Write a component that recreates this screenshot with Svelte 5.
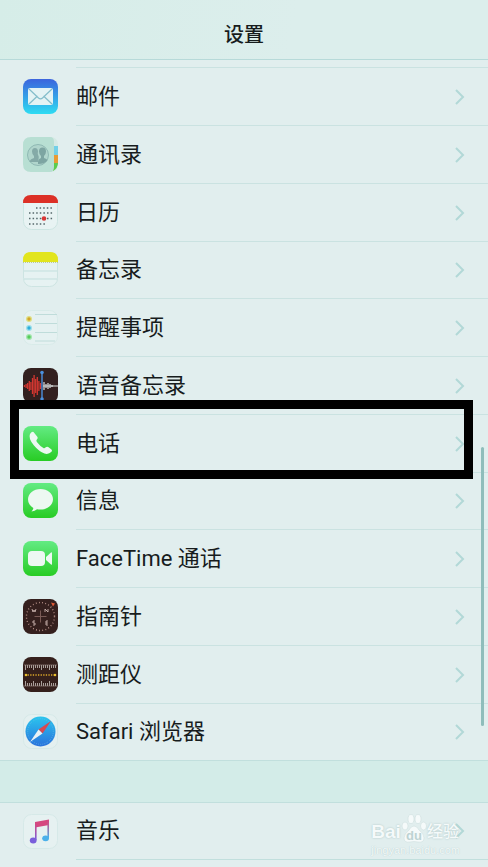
<script lang="ts">
	type Item = { id: string; label: string; marked?: boolean };

	const apps: Item[] = [
		{ id: 'mail', label: '邮件' },
		{ id: 'contacts', label: '通讯录' },
		{ id: 'calendar', label: '日历' },
		{ id: 'notes', label: '备忘录' },
		{ id: 'reminders', label: '提醒事项' },
		{ id: 'voice', label: '语音备忘录' },
		{ id: 'phone', label: '电话', marked: true },
		{ id: 'messages', label: '信息' },
		{ id: 'facetime', label: 'FaceTime 通话' },
		{ id: 'compass', label: '指南针' },
		{ id: 'measure', label: '测距仪' },
		{ id: 'safari', label: 'Safari 浏览器' }
	];

	const media: Item[] = [{ id: 'music', label: '音乐' }];

	const wave = [1, 2, 3, 5, 4, 8, 11, 7, 9, 5, 3];
	const ticks = Array.from({ length: 16 }, (_, i) => i);
</script>

{#snippet icon(id: string)}
	<svg class="icon" viewBox="0 0 35 35" aria-hidden="true">
		{#if id === 'mail'}
			<rect width="35" height="35" rx="8" fill="url(#blue)" />
			<rect x="5" y="9" width="25" height="17" rx="2" fill="#e4f3f4" />
			<path d="M6 25l8.500-8M29 25l-8.500-8M6 10l9.500 9q2 1.800 4 0l9.500-9" fill="none" stroke="#83bdca" stroke-width="1.200" />
		{:else if id === 'contacts'}
			<rect x="20" width="15" height="35" rx="7" fill="#d5e9e4" />
			<path d="M30 9h5v9h-5z" fill="#72d0e8" />
			<path d="M30 18h5v8h-5z" fill="#e99b33" />
			<path d="M30 26h5q0 5-5 8z" fill="#5ccc4d" />
			<path d="M8 0h19q4 0 4 5v25q0 5-4 5H8q-8 0-8-8V8q0-8 8-8z" fill="#b8dfd3" />
			<circle cx="15" cy="18" r="10.500" fill="#b0d5cc" stroke="#85b0ac" stroke-width=".8" />
			<path d="M15 25H6.500q.5-3 4.500-4v-2q-2-2-2-4.500Q9 11 12 11q2.500 0 3 3-.8 3 .7 5.500v1.500z" fill="#84aaa7" />
			<path d="M15 25q0-3 3-4v-2q-2-2-2-4.500 0-4 3.500-4t3.500 4q0 2.500-2 4.500v2q3 .8 3.500 2.500-3 3.500-9.500 3.500z" fill="#7da5a2" />
		{:else if id === 'calendar'}
			<rect x=".5" y=".5" width="34" height="34" rx="8" fill="#e8f3f3" stroke="#cde5e2" />
			<path d="M0 8q0-8 8-8h19q8 0 8 8z" fill="#dc3026" />
			<g stroke="#53676a" stroke-width="1.400" stroke-dasharray="1.500 2.100">
				<path d="M13 13h17M6 18h24M6 23.500h24M6 29h16" />
			</g>
			<circle cx="21" cy="23.500" r="2.300" fill="#d83736" />
		{:else if id === 'notes'}
			<rect x=".5" y=".5" width="34" height="34" rx="8" fill="#e6f2f2" stroke="#cde4e2" />
			<path d="M0 10V8q0-8 8-8h19q8 0 8 8v2z" fill="#e2e51d" />
			<path d="M0 10.500h35" stroke="#b9c995" stroke-dasharray="1 1" />
			<path d="M1 19h33M1 27h33" stroke="#c2dfdd" />
		{:else if id === 'reminders'}
			<rect x=".5" y=".5" width="34" height="34" rx="8" fill="#e5f1f1" stroke="#d8ebe9" />
			<path d="M12 4.500h22M12 13.500h22M12 22.500h22M12 31h20" stroke="#bfdcda" />
			<circle cx="6" cy="9" r="3" fill="#dddf82" /><circle cx="6" cy="9" r="1.700" fill="#d2a52a" />
			<circle cx="6" cy="18" r="3" fill="#9bdfe9" /><circle cx="6" cy="18" r="1.700" fill="#2caedb" />
			<circle cx="6" cy="27" r="3" fill="#a2e5ad" /><circle cx="6" cy="27" r="1.700" fill="#55cc59" />
		{:else if id === 'voice'}
			<rect width="35" height="35" rx="8" fill="#32201f" />
			{#each wave as h, i}
				<path d="M{1.5 + i * 1.6} {18 - h}v{h * 2}" stroke="#d43731" stroke-width="1.300" />
			{/each}
			<path d="M19 4v28" stroke="#4b91df" stroke-width="1.400" />
			<circle cx="19" cy="4.500" r="1.800" fill="#4b91df" /><circle cx="19" cy="31" r="1.800" fill="#4b91df" />
			<path d="M21 14v8M23 16v4M25 15v6M27 16v4M29 17v2M20 18h15" stroke="#d9dfdf" stroke-width="1.200" />
		{:else if id === 'phone'}
			<rect width="35" height="35" rx="8" fill="url(#green)" />
			<path d="M7 8q2-3 3.500-2l4 5q.8 1.300-.8 2.800-.8 1 .2 2.200 3 4 6.500 6 1 .6 2-.4 1.500-1.500 2.800-.6l3.300 2.500q1 1 0 2.300-3 3-7 1.800Q16 25.500 11 19.500 5 12.500 7 8z" fill="#edf8f2" />
		{:else if id === 'messages'}
			<rect width="35" height="35" rx="8" fill="url(#green)" />
			<path d="M17.500 6C10.500 6 5 10.500 5 16.300c0 3.700 2 6.700 5.300 8.600q0 2.100-1.800 3.500 3.400-.2 5.500-2.200 1.700.4 3.500.4c7 0 12.500-4.500 12.500-10.300S24.500 6 17.500 6z" fill="#edf8f2" />
		{:else if id === 'facetime'}
			<rect width="35" height="35" rx="8" fill="url(#green)" />
			<rect x="5" y="10" width="17" height="15" rx="4" fill="#edf8f2" />
			<path d="M23 16l5-4.500q1-.8 1 .5v11q0 1.300-1 .5L23 19z" fill="#edf8f2" />
		{:else if id === 'compass'}
			<rect width="35" height="35" rx="8" fill="#35201e" />
			<circle cx="17.500" cy="17.500" r="14" fill="none" stroke="#c49c93" stroke-width="1.400" stroke-dasharray=".8 2.400" />
			<path d="M11.500 17.500h12M17.500 11.500v12" stroke="#7a5b56" />
			<path d="M9 10l1 3 1-2 1 2 1-3M22 13v-3l3 3v-3M12 22h-2v2h2v2h-2M25 22h-2v4h2M23 24h2" fill="none" stroke="#ccb6b0" stroke-width=".9" />
			<path d="M28 3.500l4 1-2 3z" fill="#e05935" />
		{:else if id === 'measure'}
			<rect width="35" height="35" rx="8" fill="#35201c" />
			{#each ticks as i}
				<path d="M{2.5 + i * 2} 8v{i % 4 === 0 ? 5 : 3}M{2.5 + i * 2} 29v-{i % 4 === 0 ? 5 : 3}" stroke="#c9c1bd" stroke-width=".8" />
			{/each}
			<path d="M1 8h33M1 29h33" stroke="#9d8f8a" stroke-width=".6" />
			<path d="M2 18h31" stroke="#dda929" stroke-width="1.300" stroke-dasharray="1.300 1.300" />
			<circle cx="3" cy="18" r="1.300" fill="#ebc02f" /><circle cx="32" cy="18" r="1.300" fill="#ebc02f" />
		{:else if id === 'safari'}
			<rect x=".5" y=".5" width="34" height="34" rx="8" fill="#e4f0f0" stroke="#d6e9e8" />
			<circle cx="17.500" cy="17.500" r="15" fill="url(#sky)" />
			<circle cx="17.500" cy="17.500" r="12.800" fill="none" stroke="#6fc4ea" stroke-width="1" stroke-dasharray=".5 1.500" />
			<path d="M28 7L15.500 15.500l4 4z" fill="#d84950" />
			<path d="M7 28l8.500-12.500 4 4z" fill="#e9f2f5" />
		{:else if id === 'music'}
			<rect x=".5" y=".5" width="34" height="34" rx="8" fill="#e6f1f1" stroke="#d6e9e8" />
			<path d="M12 8l14-2.500v5.500l-14 2.500z" fill="#d5477f" />
			<path d="M12.800 9v17" stroke="url(#noteLeft)" stroke-width="1.600" />
			<path d="M25.200 7v17" stroke="url(#noteRight)" stroke-width="1.600" />
			<ellipse cx="10.200" cy="26.500" rx="3.400" ry="2.900" fill="#795fdb" />
			<ellipse cx="22.600" cy="24.300" rx="3.400" ry="2.900" fill="#4bb0ea" />
		{/if}
	</svg>
{/snippet}

{#snippet row(item: Item)}
	<li class="row" class:marked={item.marked}>
		<a class="link" href="#{item.id}">
			{@render icon(item.id)}
			<span class="body">
				<span class="label">{item.label}</span>
				<svg class="chevron" viewBox="0 0 10 16" aria-hidden="true"><path d="M1 1l7 7-7 7" /></svg>
			</span>
		</a>
	</li>
{/snippet}

<svg class="defs" aria-hidden="true">
	<defs>
		<linearGradient id="blue" x2="0" y2="1"><stop stop-color="#3c64dd" /><stop offset="1" stop-color="#2edcf2" /></linearGradient>
		<linearGradient id="green" x2="0" y2="1"><stop stop-color="#63eb83" /><stop offset="1" stop-color="#28cc24" /></linearGradient>
		<linearGradient id="sky" x2="0" y2="1"><stop stop-color="#2bc5ee" /><stop offset="1" stop-color="#2a72dc" /></linearGradient>
		<linearGradient id="noteLeft" gradientUnits="userSpaceOnUse" x1="0" y1="9" x2="0" y2="26"><stop stop-color="#d5477f" /><stop offset="1" stop-color="#795fdb" /></linearGradient>
		<linearGradient id="noteRight" gradientUnits="userSpaceOnUse" x1="0" y1="7" x2="0" y2="24"><stop stop-color="#d5477f" /><stop offset="1" stop-color="#4bb0ea" /></linearGradient>
	</defs>
</svg>

<div class="page">
	<header class="navbar">
		<h1>设置</h1>
	</header>

	<main class="content">
		<ul class="group scrolled">
			{#each apps as item (item.id)}
				{@render row(item)}
			{/each}
		</ul>
		<ul class="group last">
			{#each media as item (item.id)}
				{@render row(item)}
			{/each}
		</ul>
	</main>

	<div class="scrollbar"></div>

	<div class="watermark">
		<div class="brand">
			<span>Bai</span>
			<svg class="paw" viewBox="0 0 26 30" aria-hidden="true">
				<ellipse cx="4" cy="12" rx="3" ry="4" />
				<ellipse cx="10" cy="5" rx="3" ry="4.500" />
				<ellipse cx="17" cy="5" rx="3" ry="4.500" />
				<ellipse cx="22.500" cy="12" rx="3" ry="4" />
				<path d="M13 12q3 0 5 4 5 3 5 8 0 5-6 4-4-1-8 0-6 1-6-4 0-4 5-8 2-4 5-4z" />
				<text x="13" y="26" text-anchor="middle">du</text>
			</svg>
			<span class="cn">经验</span>
		</div>
		<div class="site">jingyan.baidu.com</div>
	</div>
</div>

<style>
	:global(body) {
		background: #d3ece8;
		font-family: Roboto, 'Noto Sans CJK SC', sans-serif;
		color: #171c1d;
	}

	.defs {
		position: absolute;
		width: 0;
		height: 0;
	}

	.page {
		position: relative;
		display: flex;
		flex-direction: column;
		height: 100vh;
		overflow: hidden;
	}

	.navbar {
		display: flex;
		flex: none;
		align-items: center;
		justify-content: center;
		box-sizing: border-box;
		height: 60px;
		padding-top: 10px;
		background: linear-gradient(100deg, #d6ede8, #dceeec 60%);
		border-bottom: 1px solid #b7dad9;
	}

	h1 {
		margin: 0;
		font-size: 20px;
		line-height: 28px;
		font-weight: 500;
	}

	.content {
		display: flex;
		flex: 1;
		flex-direction: column;
		gap: 41px;
	}

	.group {
		margin: 0;
		padding: 0;
		list-style: none;
		background: #e1eeee;
		border-bottom: 1px solid #c1dfdd;
	}

	.group.scrolled {
		padding-top: 7px;
	}

	.group.last {
		flex: 1;
		border-top: 1px solid #c1dfdd;
		border-bottom: none;
	}

	.row {
		position: relative;
		height: 58px;
	}

	.row:nth-child(4n),
	.last .row {
		height: 57px;
	}

	.link {
		display: flex;
		align-items: center;
		gap: 18px;
		height: 100%;
		padding-left: 23px;
		color: inherit;
		text-decoration: none;
	}

	.icon {
		flex: none;
		width: 35px;
		height: 35px;
	}

	.body {
		display: flex;
		flex: 1;
		align-items: center;
		justify-content: space-between;
		box-sizing: border-box;
		height: 100%;
		padding-right: 23px;
		border-top: 1px solid #cae2e1;
	}

	.last .body {
		border-top: none;
		border-bottom: 1px solid #c1dfdd;
	}

	.label {
		font-size: 22px;
		line-height: 32px;
	}

	.chevron {
		width: 10px;
		height: 16px;
		fill: none;
		stroke: #b2d8d7;
		stroke-width: 2;
	}

	.marked::after {
		content: '';
		position: absolute;
		inset: -14px 15px -7px 10px;
		z-index: 1;
		border: 9px solid #000;
		pointer-events: none;
	}

	.scrollbar {
		position: absolute;
		top: 447px;
		right: 4px;
		width: 3px;
		height: 279px;
		border-radius: 2px;
		background: #8fbdbb;
	}

	.watermark {
		position: absolute;
		right: 28px;
		bottom: 11px;
		color: #f5fafa;
		text-shadow: 0 0 2px #a9c2c2;
		pointer-events: none;
	}

	.brand {
		display: flex;
		align-items: flex-end;
		font: 700 19px/24px 'Liberation Sans', 'Noto Sans CJK SC', sans-serif;
	}

	.cn {
		font-size: 16px;
		font-weight: 500;
	}

	.paw {
		width: 26px;
		height: 30px;
		fill: #f5fafa;
		stroke: #c9dada;
		stroke-width: 0.5;
	}

	.paw text {
		fill: #bdd3d3;
		stroke: none;
		font-size: 13px;
		text-shadow: none;
	}

	.site {
		font: 11px/12px 'Liberation Sans', sans-serif;
		color: #f3f9f9;
		text-shadow: 0 0 1px #a9c2c2;
	}
</style>
